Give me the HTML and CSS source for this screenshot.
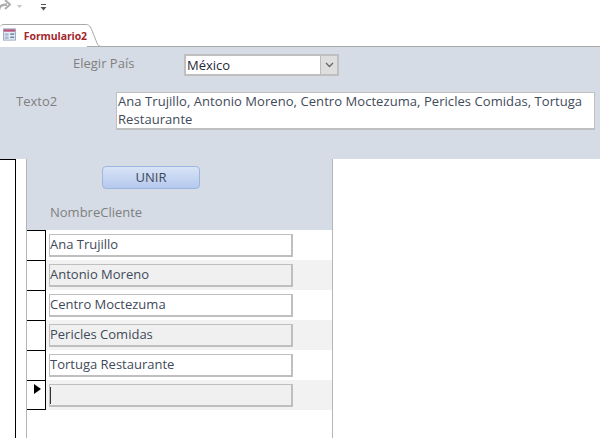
FILE: index.html
```html
<!DOCTYPE html>
<html lang="es">
<head>
<meta charset="utf-8">
<title>Formulario2</title>
<link rel="stylesheet" href="styles.css">
</head>
<body>
<div class="qat">
  <svg class="redo" width="12" height="12" viewBox="0 0 12 12"><path d="M0 10C0 6 3 4.500 8 4.500" fill="none" stroke="#aeaeae" stroke-width="2.400"/><path d="M6 0l5 4.500-5 4.500" fill="none" stroke="#aeaeae" stroke-width="2"/></svg>
  <svg class="drop" width="7" height="5" viewBox="0 0 7 5"><path d="M1 1h5L3.500 4z" fill="#c4c4c4"/></svg>
  <svg class="custom" width="7" height="9" viewBox="0 0 7 9"><path d="M1 1.500h5" stroke="#555" stroke-width="1"/><path d="M0.500 4h6L3.500 7.500z" fill="#555"/></svg>
</div>
<div class="tabstrip">
  <div class="tab">
    <svg class="tab-icon" width="16" height="15" viewBox="0 0 16 15"><rect x=".5" y=".5" width="15" height="14" fill="#e6ecf5" stroke="#8c9db5"/><rect x="1" y="1" width="14" height="3" fill="#b8557a"/><rect x="2" y="6" width="5" height="3" fill="#a9bad2"/><rect x="9" y="6" width="5" height="2" fill="#6f88aa"/><rect x="2" y="10" width="5" height="3" fill="#a9bad2"/><rect x="9" y="10" width="5" height="2" fill="#6f88aa"/></svg>
    <span class="tab-title">Formulario2</span>
    <svg class="tab-curve" width="18" height="23" viewBox="0 0 18 23"><path d="M0 .500h1C5 .500 6 4 8 9l4 10c1 2.500 2 3.500 5 3.500" fill="#fff" stroke="#a9a9a9"/></svg>
  </div>
</div>
<header class="form-head">
  <div class="field-row country-row">
    <label class="caption country-label">Elegir País</label>
    <div class="combo">
      <span class="combo-text">México</span>
      <span class="combo-btn"><svg width="9" height="6" viewBox="0 0 9 6"><path d="M1 1l3.500 3.500L8 1" fill="none" stroke="#666" stroke-width="1.300"/></svg></span>
    </div>
  </div>
  <div class="field-row text-row">
    <label class="caption text-label">Texto2</label>
    <div class="memo">Ana Trujillo, Antonio Moreno, Centro Moctezuma, Pericles Comidas, Tortuga Restaurante</div>
  </div>
</header>
<main class="workspace">
  <div class="gutter"></div>
  <section class="subform">
    <div class="sub-head">
      <button class="unir" type="button">UNIR</button>
      <div class="caption col-label">NombreCliente</div>
    </div>
    <div class="row"><span class="sel"></span><span class="cell">Ana Trujillo</span></div>
    <div class="row alt"><span class="sel"></span><span class="cell">Antonio Moreno</span></div>
    <div class="row"><span class="sel"></span><span class="cell">Centro Moctezuma</span></div>
    <div class="row alt"><span class="sel"></span><span class="cell">Pericles Comidas</span></div>
    <div class="row"><span class="sel"></span><span class="cell">Tortuga Restaurante</span></div>
    <div class="row alt"><span class="sel current"><svg width="7" height="10" viewBox="0 0 7 10"><path d="M0 0l7 5-7 5z" fill="#000"/></svg></span><span class="cell"><i class="caret"></i></span></div>
  </section>
</main>
</body>
</html>
```
FILE: styles.css
```css
* { box-sizing: border-box; }
html, body { margin: 0; height: 438px; overflow: hidden; }
body {
  background: #fff;
  color: #3f4a5a;
  font: 13px/18px "Open Sans", "Noto Sans", sans-serif;
  display: flex;
  flex-direction: column;
}
.qat { height: 24px; display: flex; align-items: flex-start; }
.redo { margin-left: -1px; }
.drop { margin: 4px 0 0 5px; }
.custom { margin: 3px 0 0 17px; }
.tabstrip { height: 23px; border-bottom: 1px solid #a9a9a9; }
.tab {
  width: 87px; height: 23px; display: flex; align-items: center; gap: 8px;
  padding-left: 3px; border-top: 1px solid #a9a9a9; border-top-left-radius: 4px;
  background: #fff; position: relative;
}
.tab-icon { margin-top: -3px; }
.tab-title { color: #a4262c; font-size: 10.5px; font-weight: 700; white-space: nowrap; letter-spacing: -.1px; }
.tab-curve { position: absolute; left: 85px; top: -1px; }
.form-head { height: 112px; background: #d6dce5; flex: none; }
.field-row { display: flex; }
.caption { color: #7f7f7f; }
.country-row { padding: 7px 0 0 73px; height: 45px; }
.country-label { width: 111px; }
.combo {
  width: 155px; height: 22px; display: flex; background: #fff;
  box-shadow: inset 0 0 0 1px #bfbfbf; padding: 1px;
  border: 1px solid #bfbfbf;
}
.combo-text { flex: 1; padding-left: 1px; color: #1f2937; line-height: 18px; }
.combo-btn {
  width: 17px; background: #dedede; border-left: 1px solid #bdbdbd;
  display: flex; align-items: center; justify-content: center;
}
.text-row { padding-left: 16px; }
.text-label { width: 100px; }
.memo {
  width: 479px; height: 38px; background: #fff;
  box-shadow: inset 0 0 0 1px #bfbfbf, inset 0 -2px 0 #bfbfbf;
  padding: 0 2px; line-height: 18px; letter-spacing: .06px;
}
.workspace { flex: 1; display: flex; align-items: stretch; }
.gutter { width: 16px; border-top: 1px solid #000; border-right: 1px solid #000; margin-right: 10px; }
.subform { width: 307px; border-left: 1px solid #b5b5b5; border-right: 1px solid #b5b5b5; }
.sub-head { height: 71px; background: #d6dce5; padding-top: 7px; }
.unir {
  display: block; width: 98px; height: 23px; margin-left: 75px; padding: 0 0 2px;
  border: 1px solid #9db6dd; border-radius: 4px;
  background: linear-gradient(#d8e3f6, #b5c9ee);
  color: #3f4a5a; font: 13px "Open Sans", "Noto Sans", sans-serif;
}
.col-label { margin: 14px 0 0 23px; }
.row { height: 30px; display: flex; align-items: flex-start; }
.row.alt { background: #f2f2f2; }
.sel {
  width: 19px; height: 30px; background: #fff;
  border: 1px solid #000; border-width: 1px 1px 0 0; flex: none;
  padding: 3px 0 0 7px; display: block;
}
.row:last-child .sel { border-bottom-width: 1px; }
.sel svg { display: block; }
.cell {
  width: 244px; height: 23px; margin: 4px 0 0 3px;
  border: 2px solid #bfbfbf; border-width: 1px 2px 2px 1px;
  background: #fff; line-height: 18px; color: #3f4a5a;
}
.alt .cell { background: #f0f0f0; }
.caret { display: block; width: 1px; height: 17px; background: #333; margin-top: 2px; }
```
